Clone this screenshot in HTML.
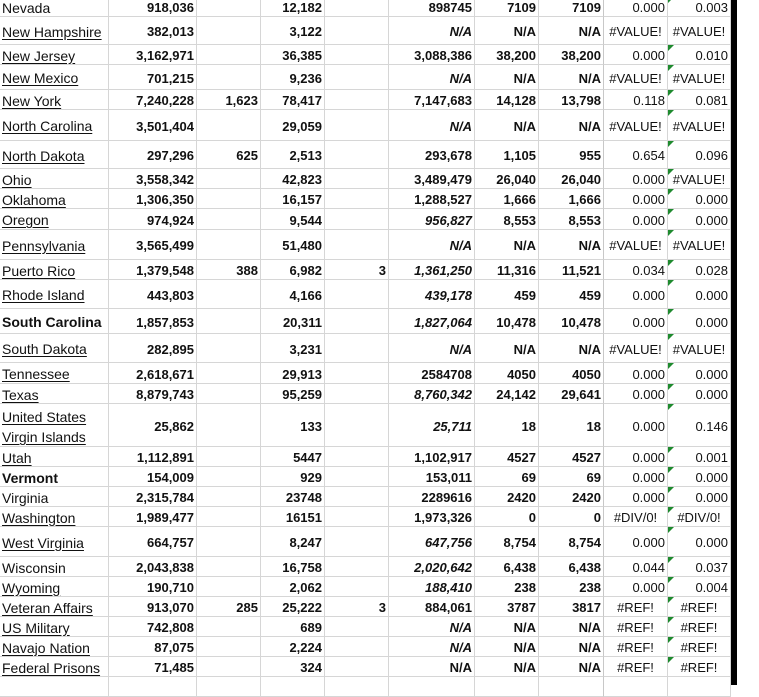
<!DOCTYPE html>
<html><head><meta charset="utf-8"><style>
html,body{margin:0;padding:0;background:#fff;}
body{width:759px;height:685px;overflow:hidden;position:relative;font-family:"Liberation Sans",Arial,sans-serif;color:#111;}
.r{position:absolute;left:0;width:731px;}
.r>span{position:absolute;top:0;bottom:0;box-sizing:border-box;border-right:1px solid #d6d6d6;border-bottom:1px solid #d6d6d6;display:flex;align-items:center;padding-top:2px;white-space:nowrap;font-size:13px;font-weight:bold;justify-content:flex-end;padding-right:2px;}
.r>span:nth-child(1){left:0;width:109px;justify-content:flex-start;padding-left:2px;font-weight:normal;font-size:14px;}
.r>span:nth-child(2){left:109px;width:88px;}
.r>span:nth-child(3){left:197px;width:64px;}
.r>span:nth-child(4){left:261px;width:64px;}
.r>span:nth-child(5){left:325px;width:64px;}
.r>span:nth-child(6){left:389px;width:86px;}
.r>span:nth-child(7){left:475px;width:64px;}
.r>span:nth-child(8){left:539px;width:65px;border-right-color:#c8c8c8;}
.r>span:nth-child(9){left:604px;width:64px;font-weight:normal;}
.r>span:nth-child(10){left:668px;width:63px;font-weight:normal;}
.r>span.e{justify-content:center;padding-right:0;}
.r>span.t::before{content:"";position:absolute;left:0;top:0;border-top:6px solid #1e8a2e;border-right:6px solid transparent;}
.u{text-decoration:underline;text-underline-offset:2px;}
.r>span.b{font-weight:bold;}
i{font-style:italic;}
.bar{position:absolute;left:731px;top:0;width:6px;height:685px;background:#000;}
</style></head><body>
<div class="r" style="top:-3px;height:20px"><span>Nevada</span><span>918,036</span><span></span><span>12,182</span><span></span><span>898745</span><span>7109</span><span>7109</span><span>0.000</span><span class="t">0.003</span></div>
<div class="r" style="top:17px;height:28px"><span class="u">New Hampshire</span><span>382,013</span><span></span><span>3,122</span><span></span><span><i>N/A</i></span><span>N/A</span><span>N/A</span><span class="e">#VALUE!</span><span class="e">#VALUE!</span></div>
<div class="r" style="top:45px;height:20px"><span class="u">New Jersey</span><span>3,162,971</span><span></span><span>36,385</span><span></span><span>3,088,386</span><span>38,200</span><span>38,200</span><span>0.000</span><span class="t">0.010</span></div>
<div class="r" style="top:65px;height:25px"><span class="u">New Mexico</span><span>701,215</span><span></span><span>9,236</span><span></span><span><i>N/A</i></span><span>N/A</span><span>N/A</span><span class="e">#VALUE!</span><span class="e t">#VALUE!</span></div>
<div class="r" style="top:90px;height:20px"><span class="u">New York</span><span>7,240,228</span><span>1,623</span><span>78,417</span><span></span><span>7,147,683</span><span>14,128</span><span>13,798</span><span>0.118</span><span class="t">0.081</span></div>
<div class="r" style="top:110px;height:31px"><span class="u">North Carolina</span><span>3,501,404</span><span></span><span>29,059</span><span></span><span><i>N/A</i></span><span>N/A</span><span>N/A</span><span class="e">#VALUE!</span><span class="e t">#VALUE!</span></div>
<div class="r" style="top:141px;height:28px"><span class="u">North Dakota</span><span>297,296</span><span>625</span><span>2,513</span><span></span><span>293,678</span><span>1,105</span><span>955</span><span>0.654</span><span class="t">0.096</span></div>
<div class="r" style="top:169px;height:20px"><span class="u">Ohio</span><span>3,558,342</span><span></span><span>42,823</span><span></span><span>3,489,479</span><span>26,040</span><span>26,040</span><span>0.000</span><span class="e t">#VALUE!</span></div>
<div class="r" style="top:189px;height:20px"><span class="u">Oklahoma</span><span>1,306,350</span><span></span><span>16,157</span><span></span><span>1,288,527</span><span>1,666</span><span>1,666</span><span>0.000</span><span class="t">0.000</span></div>
<div class="r" style="top:209px;height:21px"><span class="u">Oregon</span><span>974,924</span><span></span><span>9,544</span><span></span><span><i>956,827</i></span><span>8,553</span><span>8,553</span><span>0.000</span><span class="t">0.000</span></div>
<div class="r" style="top:230px;height:30px"><span class="u">Pennsylvania</span><span>3,565,499</span><span></span><span>51,480</span><span></span><span><i>N/A</i></span><span>N/A</span><span>N/A</span><span class="e">#VALUE!</span><span class="e t">#VALUE!</span></div>
<div class="r" style="top:260px;height:20px"><span class="u">Puerto Rico</span><span>1,379,548</span><span>388</span><span>6,982</span><span>3</span><span><i>1,361,250</i></span><span>11,316</span><span>11,521</span><span>0.034</span><span class="t">0.028</span></div>
<div class="r" style="top:280px;height:29px"><span class="u">Rhode Island</span><span>443,803</span><span></span><span>4,166</span><span></span><span><i>439,178</i></span><span>459</span><span>459</span><span>0.000</span><span class="t">0.000</span></div>
<div class="r" style="top:309px;height:25px"><span class="b">South Carolina</span><span>1,857,853</span><span></span><span>20,311</span><span></span><span><i>1,827,064</i></span><span>10,478</span><span>10,478</span><span>0.000</span><span class="t">0.000</span></div>
<div class="r" style="top:334px;height:29px"><span class="u">South Dakota</span><span>282,895</span><span></span><span>3,231</span><span></span><span><i>N/A</i></span><span>N/A</span><span>N/A</span><span class="e">#VALUE!</span><span class="e t">#VALUE!</span></div>
<div class="r" style="top:363px;height:21px"><span class="u">Tennessee</span><span>2,618,671</span><span></span><span>29,913</span><span></span><span>2584708</span><span>4050</span><span>4050</span><span>0.000</span><span class="t">0.000</span></div>
<div class="r" style="top:384px;height:20px"><span class="u">Texas</span><span>8,879,743</span><span></span><span>95,259</span><span></span><span><i>8,760,342</i></span><span>24,142</span><span>29,641</span><span>0.000</span><span class="t">0.000</span></div>
<div class="r" style="top:404px;height:43px"><span class="u" style="white-space:normal;line-height:20px;display:block;padding-top:3px">United States Virgin Islands</span><span>25,862</span><span></span><span>133</span><span></span><span><i>25,711</i></span><span>18</span><span>18</span><span>0.000</span><span class="t">0.146</span></div>
<div class="r" style="top:447px;height:20px"><span class="u">Utah</span><span>1,112,891</span><span></span><span>5447</span><span></span><span>1,102,917</span><span>4527</span><span>4527</span><span>0.000</span><span class="t">0.001</span></div>
<div class="r" style="top:467px;height:20px"><span class="b">Vermont</span><span>154,009</span><span></span><span>929</span><span></span><span>153,011</span><span>69</span><span>69</span><span>0.000</span><span class="t">0.000</span></div>
<div class="r" style="top:487px;height:20px"><span>Virginia</span><span>2,315,784</span><span></span><span>23748</span><span></span><span>2289616</span><span>2420</span><span>2420</span><span>0.000</span><span class="t">0.000</span></div>
<div class="r" style="top:507px;height:20px"><span class="u">Washington</span><span>1,989,477</span><span></span><span>16151</span><span></span><span>1,973,326</span><span>0</span><span>0</span><span class="e">#DIV/0!</span><span class="e t">#DIV/0!</span></div>
<div class="r" style="top:527px;height:30px"><span class="u">West Virginia</span><span>664,757</span><span></span><span>8,247</span><span></span><span><i>647,756</i></span><span>8,754</span><span>8,754</span><span>0.000</span><span class="t">0.000</span></div>
<div class="r" style="top:557px;height:20px"><span>Wisconsin</span><span>2,043,838</span><span></span><span>16,758</span><span></span><span><i>2,020,642</i></span><span>6,438</span><span>6,438</span><span>0.044</span><span class="t">0.037</span></div>
<div class="r" style="top:577px;height:20px"><span class="u">Wyoming</span><span>190,710</span><span></span><span>2,062</span><span></span><span><i>188,410</i></span><span>238</span><span>238</span><span>0.000</span><span class="t">0.004</span></div>
<div class="r" style="top:597px;height:20px"><span class="u">Veteran Affairs</span><span>913,070</span><span>285</span><span>25,222</span><span>3</span><span>884,061</span><span>3787</span><span>3817</span><span class="e">#REF!</span><span class="e t">#REF!</span></div>
<div class="r" style="top:617px;height:20px"><span class="u">US Military</span><span>742,808</span><span></span><span>689</span><span></span><span><i>N/A</i></span><span>N/A</span><span>N/A</span><span class="e">#REF!</span><span class="e t">#REF!</span></div>
<div class="r" style="top:637px;height:20px"><span class="u">Navajo Nation</span><span>87,075</span><span></span><span>2,224</span><span></span><span><i>N/A</i></span><span>N/A</span><span>N/A</span><span class="e">#REF!</span><span class="e t">#REF!</span></div>
<div class="r" style="top:657px;height:20px"><span class="u">Federal Prisons</span><span>71,485</span><span></span><span>324</span><span></span><span>N/A</span><span>N/A</span><span>N/A</span><span class="e">#REF!</span><span class="e t">#REF!</span></div>
<div class="r" style="top:677px;height:20px"><span></span><span></span><span></span><span></span><span></span><span></span><span></span><span></span><span></span><span></span></div>
<div class="bar"></div>
</body></html>
